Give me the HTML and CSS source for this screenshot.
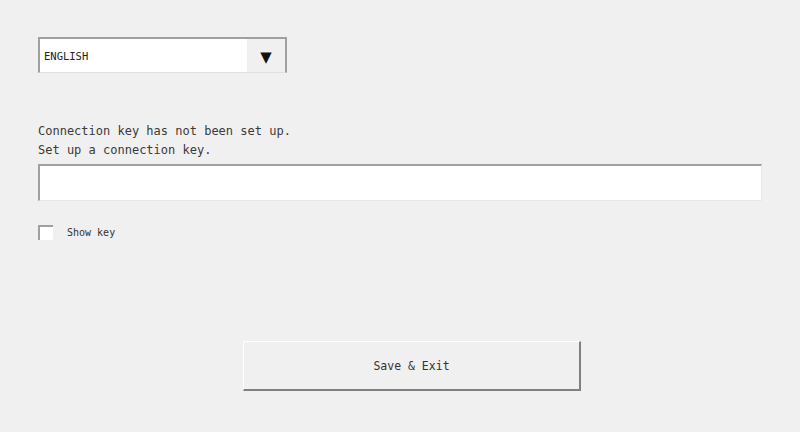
FILE: index.html
```html
<!DOCTYPE html>
<html lang="en">
<head>
    <meta charset="UTF-8">
    <title>Connection key</title>
    <link rel="stylesheet" href="styles.css">
</head>
<body>
    <div class="panel">
        <div class="idioma">
            <span class="idioma-texto">ENGLISH</span>
            <span class="idioma-flecha">&#9660;</span>
        </div>

        <div class="mensaje">
            <p>Connection key has not been set up.</p>
            <p>Set up a connection key.</p>
        </div>

        <div class="clave"></div>

        <label class="mostrar">
            <span class="casilla"></span>
            <span>Show key</span>
        </label>

        <div class="acciones">
            <div class="boton">Save &amp; Exit</div>
        </div>
    </div>
</body>
</html>
```
FILE: styles.css
```css
html, body { margin: 0; height: 100%; }
body {
    background: #f0f0f0;
    font-family: "DejaVu Sans Mono", "Liberation Mono", monospace;
    color: #333;
}

.panel {
    display: flex;
    flex-direction: column;
    padding: 37px 38px 0 38px;
}

/* Selector de idioma */
.idioma {
    display: flex;
    width: 249px;
    height: 36px;
    box-sizing: border-box;
    background: #fff;
    border-top: 2px solid #a0a0a0;
    border-left: 2px solid #a0a0a0;
    border-right: 2px solid #a0a0a0;
    border-bottom: 1px solid #e0e0e0;
}
.idioma-texto {
    flex: 1;
    display: flex;
    align-items: center;
    padding-left: 4px;
    font-size: 10.5px;
    color: #222;
}
.idioma-flecha {
    width: 38px;
    background: #f0f0f0;
    display: flex;
    align-items: center;
    justify-content: center;
    font-size: 19px;
    color: #111;
}

.mensaje {
    margin-top: 49px;
    font-size: 12px;
    line-height: 19px;
    color: #3a3a3a;
}
.mensaje p { margin: 0; }

/* Campo de la clave */
.clave {
    margin-top: 4px;
    height: 37px;
    box-sizing: border-box;
    background: #fff;
    border-top: 2px solid #a0a0a0;
    border-left: 2px solid #a0a0a0;
    border-right: 1px solid #e8e8e8;
    border-bottom: 1px solid #e8e8e8;
}

.mostrar {
    display: flex;
    align-items: center;
    gap: 14px;
    margin-top: 24px;
    font-size: 10px;
    color: #333;
}
.casilla {
    width: 15px;
    height: 15px;
    box-sizing: border-box;
    background: #fff;
    border-top: 2px solid #a0a0a0;
    border-left: 2px solid #a0a0a0;
}

.acciones {
    display: flex;
    justify-content: center;
    margin-top: 101px;
    padding-left: 24px;
}
.boton {
    width: 338px;
    height: 50px;
    box-sizing: border-box;
    display: flex;
    align-items: center;
    justify-content: center;
    background: #f0f0f0;
    border-top: 1px solid #fff;
    border-left: 1px solid #fff;
    border-right: 2px solid #808080;
    border-bottom: 2px solid #808080;
    font-size: 11.5px;
    color: #333;
}
```
